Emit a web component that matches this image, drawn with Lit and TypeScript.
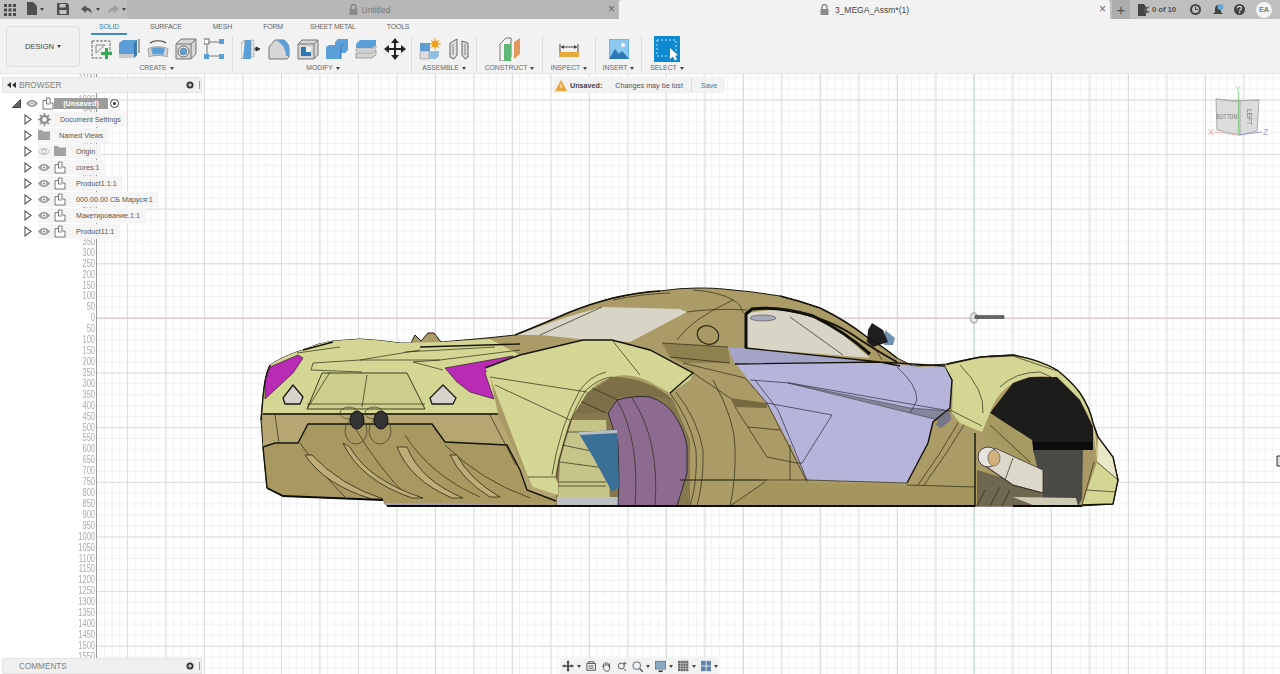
import { LitElement, html, css, svg } from 'lit';
import { customElement } from 'lit/decorators.js';

const BLUE = '#5b9fd8';

const gridIcon = html`<svg width="12" height="12" viewBox="0 0 12 12" fill="#4a4a4a"><rect x="0" y="0" width="3" height="3"/><rect x="4.5" y="0" width="3" height="3"/><rect x="9" y="0" width="3" height="3"/><rect x="0" y="4.5" width="3" height="3"/><rect x="4.5" y="4.5" width="3" height="3"/><rect x="9" y="4.5" width="3" height="3"/><rect x="0" y="9" width="3" height="3"/><rect x="4.5" y="9" width="3" height="3"/><rect x="9" y="9" width="3" height="3"/></svg>`;
const fileIcon = html`<svg width="10" height="13" viewBox="0 0 10 13" fill="#4f4f4f"><path d="M0 0h6l4 4v9H0z"/></svg>`;
const saveIcon = html`<svg width="12" height="12" viewBox="0 0 12 12"><path d="M0 0h10l2 2v10H0z" fill="#4f4f4f"/><rect x="2.5" y="1" width="6" height="3.5" fill="#c4c4c4"/><rect x="2.5" y="7" width="7" height="4" fill="#c4c4c4"/></svg>`;
const undoIcon = (c: string, flip = false) => html`<svg class=${flip ? 'flip' : ''} width="12" height="10" viewBox="0 0 12 10"><path d="M5 0 0 4l5 4V5.5c3 0 4.500 1 5.500 3.500C11 5 9 2.500 5 2.500z" fill=${c}/></svg>`;
const caret = html`<span class="caret"></span>`;
const lock = html`<svg width="9" height="11" viewBox="0 0 9 11"><path d="M2 5V3a2.500 2.500 0 0 1 5 0v2" fill="none" stroke="#777" stroke-width="1.200"/><rect x="0.500" y="5" width="8" height="6" fill="#8a8a8a"/></svg>`;

const icons: Record<string, unknown> = {
  sketch: html`<svg width="22" height="22" viewBox="0 0 22 22"><path d="M2 3h18v13M2 3v17h10" fill="none" stroke="#666" stroke-dasharray="3 1"/><path d="M6 7h9L6 15z" fill="none" stroke="#888"/><path d="M16 10h3v4h4v3h-4v4h-3v-4h-4v-3h4z" transform="translate(-1 0)" fill="#3aa655"/></svg>`,
  extrude: html`<svg width="22" height="22" viewBox="0 0 22 22"><path d="M1 5l4-3h14v15l-3 3H1z" fill="${BLUE}"/><path d="M16 20V5l3-3v15z" fill="#3d78ad"/><path d="M1 16h15v4H1z" fill="#c9c9c9"/><path d="M21 1v14" stroke="#555"/></svg>`,
  revolve: html`<svg width="22" height="22" viewBox="0 0 22 22"><path d="M1 11c3-3 17-3 20 0l-1 8c-3-2-15-2-18 0z" fill="#d2d2d2" stroke="#777" stroke-width=".6"/><path d="M4 11c3-2 11-2 14 0l-2 6c-2-1-8-1-10 0z" fill="${BLUE}"/><path d="M3 5c4-3 12-3 16 0" fill="none" stroke="#444" stroke-width="1.200"/></svg>`,
  hole: html`<svg width="22" height="22" viewBox="0 0 22 22"><path d="M1 6l5-5h15v15l-5 5H1z" fill="#d6d6d6" stroke="#777"/><path d="M16 21V6l5-5M1 6h15" fill="none" stroke="#777"/><circle cx="8.500" cy="13.500" r="5.500" fill="#eee" stroke="#666"/><circle cx="8.500" cy="13.500" r="3.500" fill="${BLUE}" stroke="#666" stroke-width=".5"/></svg>`,
  pattern: html`<svg width="20" height="22" viewBox="0 0 20 22"><path d="M5 4h10M3 7v9M5 18h10" stroke="#777" fill="none"/><rect x="0" y="1" width="5" height="5" fill="#fff" stroke="#666"/><rect x="15" y="1" width="5" height="5" fill="${BLUE}"/><rect x="0" y="16" width="5" height="5" fill="${BLUE}"/><rect x="15" y="16" width="5" height="5" fill="${BLUE}"/></svg>`,
  press: html`<svg width="20" height="22" viewBox="0 0 20 22"><path d="M0 5l4-3v17l-4 2z" fill="#eee" stroke="#777" stroke-width=".6"/><path d="M4 2h6v19H2z" fill="${BLUE}"/><path d="M10 2h3v17h-3z" fill="#e4e4e4" stroke="#888" stroke-width=".5"/><path d="M13 11h4M15 9l4 2-4 2z" fill="#333" stroke="#333"/></svg>`,
  fillet: html`<svg width="22" height="22" viewBox="0 0 22 22"><path d="M1 9l6-7h9c3 2 5 5 5 9v8l-2 2H1z" fill="#d6d6d6" stroke="#777"/><path d="M8 2h8c3 2 5 5 5 9v7h-3c0-8-4-12-10-16z" fill="${BLUE}"/></svg>`,
  shell: html`<svg width="22" height="22" viewBox="0 0 22 22"><path d="M1 6l4-4h16v15l-4 4H1z" fill="#d6d6d6" stroke="#777"/><path d="M17 21V6l4-4M1 6h16" fill="none" stroke="#777"/><path d="M4 9h10v9H4z" fill="#f2f2f2"/><path d="M4 9h5v5h5v4H4z" fill="#2f78b4"/></svg>`,
  combine: html`<svg width="22" height="22" viewBox="0 0 22 22"><path d="M9 4l3-3h10v11l-3 3H15v6H0V9l3-2h6z" fill="${BLUE}"/><path d="M15 21V9l3-3" stroke="#3d78ad" fill="none"/></svg>`,
  offset: html`<svg width="22" height="22" viewBox="0 0 22 22"><path d="M1 6l4-4h16v5l-4 3H1z" fill="${BLUE}"/><path d="M1 11h16l4-3v2l-4 3H1z" fill="#fff" stroke="#666" stroke-width=".6"/><path d="M1 15h16l4-3v5l-4 3H1z" fill="#d2d2d2" stroke="#777" stroke-width=".6"/></svg>`,
  move: html`<svg width="22" height="22" viewBox="0 0 22 22" fill="#222"><path d="M11 0l4 5h-3v5h5V7l5 4-5 4v-3h-5v5h3l-4 5-4-5h3v-5H5v3l-5-4 5-4v3h5V5H7z"/></svg>`,
  assemble: html`<svg width="22" height="22" viewBox="0 0 22 22"><path d="M1 5h10v8H1z" fill="${BLUE}"/><path d="M1 13h9v8H1z" fill="#dcdcdc" stroke="#888" stroke-width=".5"/><path d="M10 13h10v5l-3 3h-7z" fill="#8fbfe4"/><circle cx="16" cy="6" r="3.500" fill="#f0a020"/><path d="M16 0v12M10 6h12M12 2l8 8M20 2l-8 8" stroke="#f0a020"/></svg>`,
  joint: html`<svg width="20" height="22" viewBox="0 0 20 22"><path d="M1 5l7-4v16l-3 4-4-2z" fill="#ddd" stroke="#666"/><path d="M19 5l-6-2v14l3 4 3-2z" fill="#ddd" stroke="#666"/><path d="M4 6v11M16 6v11" stroke="#888"/></svg>`,
  construct: html`<svg width="22" height="24" viewBox="0 0 22 24"><path d="M1 7l6-6h5v19l-6 4H1z" fill="#f2f2f2" stroke="#777"/><path d="M5 7h7v17H5z" fill="#60b878"/><path d="M15 5l6-4v16l-6 5z" fill="#e09a60"/></svg>`,
  inspect: html`<svg width="22" height="20" viewBox="0 0 22 20"><path d="M2 5v8M20 5v8M3 8h16" stroke="#444" fill="none"/><path d="M3 8l3-2v4zM19 8l-3-2v4z" fill="#444"/><rect x="1" y="13" width="20" height="5" fill="#e5a93a"/></svg>`,
  insert: html`<svg width="20" height="20" viewBox="0 0 20 20"><rect width="20" height="20" fill="#6db4e8"/><rect x="1" y="1" width="18" height="18" fill="#8cc8f0"/><circle cx="14" cy="6" r="2" fill="#fff"/><path d="M0 20l6-10 4 5 3-3 7 8z" fill="#2d78b8"/></svg>`,
  select: html`<svg width="26" height="26" viewBox="0 0 26 26"><rect width="26" height="26" fill="#0f8ad0"/><rect x="3" y="4" width="19" height="16" fill="none" stroke="#bfe3f8" stroke-dasharray="2 2"/><path d="M16 12v11l3-2.500 2 4 2-1-2-4h3z" fill="#fff"/></svg>`,
};

const groups = [
  { label: 'CREATE', cls: 'create', icons: ['sketch', 'extrude', 'revolve', 'hole', 'pattern'] },
  { label: 'MODIFY', cls: 'modify', icons: ['press', 'fillet', 'shell', 'combine', 'offset', 'move'] },
  { label: 'ASSEMBLE', cls: 'assemble', icons: ['assemble', 'joint'] },
  { label: 'CONSTRUCT', cls: 'construct', icons: ['construct'] },
  { label: 'INSPECT', cls: 'inspect', icons: ['inspect'] },
  { label: 'INSERT', cls: 'insert', icons: ['insert'] },
  { label: 'SELECT', cls: 'select', icons: ['select'] },
];

const eye = (on = true) => html`<svg width="12" height="9" viewBox="0 0 12 9"><path d="M0.500 4.500C3 0.500 9 0.500 11.500 4.500 9 8.500 3 8.500 0.500 4.500z" fill=${on ? '#a8a8a8' : 'none'} stroke=${on ? '#999' : '#bbb'}/><circle cx="6" cy="4.500" r="2" fill=${on ? '#fff' : 'none'} stroke=${on ? 'none' : '#bbb'}/><circle cx="6" cy="4.500" r="1" fill=${on ? '#888' : 'none'}/></svg>`;
const comp = html`<svg width="12" height="13" viewBox="0 0 12 13"><path d="M1 3.500h3.500V1H8v5h3v6H1z" fill="#fff" stroke="#777"/><path d="M4.500 3.500V7H8" fill="none" stroke="#777"/></svg>`;
const folder = html`<svg width="12" height="10" viewBox="0 0 12 10"><path d="M0 0h4l1 1.500h7V10H0z" fill="#a2a2a2"/></svg>`;
const gear = html`<svg width="13" height="13" viewBox="0 0 13 13"><circle cx="6.500" cy="6.500" r="3.500" fill="none" stroke="#8a8a8a" stroke-width="2.200"/><path d="M6.500 0v13M0 6.500h13M2 2l9 9M11 2l-9 9" stroke="#8a8a8a" stroke-width="1.500" stroke-dasharray="2 9"/></svg>`;
const tri = html`<svg width="8" height="11" viewBox="0 0 8 11"><path d="M1 1l6 4.500L1 10z" fill="#fff" stroke="#555" stroke-width="1.100"/></svg>`;
const pin = html`<svg width="8" height="8" viewBox="0 0 8 8"><circle cx="4" cy="4" r="3.500" fill="#333"/><path d="M2 4h4M4 2v4" stroke="#f2f2f2"/></svg>`;
const collapse = html`<svg width="9" height="6" viewBox="0 0 9 6" fill="#333"><path d="M4 0v6L0 3zM9 0v6L5 3z"/></svg>`;

const rows = [
  { label: 'Document Settings', kind: 'settings' },
  { label: 'Named Views', kind: 'views' },
  { label: 'Origin', kind: 'origin' },
  { label: 'cores:1', kind: 'comp' },
  { label: 'Product1.1:1', kind: 'comp' },
  { label: '000.00.00 СБ Маруся:1', kind: 'comp' },
  { label: 'Макетирование.1:1', kind: 'comp' },
  { label: 'Product11:1', kind: 'comp' },
];

const navIcons = html`
  <svg width="14" height="14" viewBox="0 0 14 14" fill="#444"><path d="M7 0l2 3H8v3h3V5l3 2-3 2V8H8v3h1l-2 3-2-3h1V8H3v1L0 7l3-2v1h3V3H5z"/></svg>${caret}
  <svg class="sp" width="12" height="12" viewBox="0 0 12 12"><path d="M1 3h10v8H1zM3 3V1h6v2M3 6h6M3 8.500h6" fill="none" stroke="#444"/></svg>
  <svg class="sp" width="12" height="13" viewBox="0 0 12 13"><path d="M3 7V3M5 6V1.500M7 6V1.500M9 7V3M3 7L1.500 6M3 7c0 4 2 5 4 5s3-1 3-4V3" fill="none" stroke="#444"/></svg>
  <svg class="sp" width="12" height="12" viewBox="0 0 12 12"><circle cx="5" cy="6" r="3.500" fill="none" stroke="#444"/><path d="M8 9l3 3" stroke="#444"/><path d="M9 1v4M7 3h4" stroke="#666"/></svg>
  <svg class="sp" width="13" height="13" viewBox="0 0 13 13"><circle cx="5.500" cy="5.500" r="4.500" fill="#eef4f8" stroke="#555"/><path d="M9 9l4 4" stroke="#444" stroke-width="1.500"/></svg>${caret}
  <svg class="sp" width="13" height="13" viewBox="0 0 13 13"><rect width="13" height="10" fill="#5c7f9e"/><rect x="1" y="1" width="11" height="8" fill="#8aa7bf"/><path d="M4 12h5" stroke="#444" stroke-width="2"/></svg>${caret}
  <svg class="sp" width="12" height="12" viewBox="0 0 12 12"><rect width="12" height="12" fill="#666"/><path d="M3 0v12M6 0v12M9 0v12M0 3h12M0 6h12M0 9h12" stroke="#ddd" stroke-width=".6"/></svg>${caret}
  <svg class="sp" width="12" height="12" viewBox="0 0 12 12"><rect width="12" height="12" fill="#5c84ad"/><path d="M6 0v12M0 6h12" stroke="#eee"/></svg>${caret}
`;

// rear 3/4 side view, coordinates are window pixels
const carScene = svg`
  <line class="ax-g" x1="974" y1="74" x2="974" y2="674"/>
  <line class="ax-r" x1="97" y1="318" x2="1280" y2="318"/>
  <ellipse class="org" cx="974" cy="318" rx="3.500" ry="5"/>
  <path class="bar" d="M975 315.500h29v3h-29z"/>

  <path class="body" d="M261 420 263 397Q265 375 270 365 285 355 303 350 318 343 333 341L360 339Q380 340 400 343L411 343 415 335 421 341 428 333 434 333 441 342 487 338 515 335Q540 325 570 312 590 304 613 298 640 292 660 291 680 288 697 288 715 288 723 289 750 291 780 296 800 301 820 308 845 320 867 337 885 348 897 358L913 366 947 364Q970 358 990 356L1013 355Q1040 360 1057 370 1072 382 1080 393 1090 408 1093 423L1098 437 1113 457 1118 480 1113 504 1080 506 387 506 383 500 283 496 267 488 263 447Z"/>
  <path class="shade" d="M662 343 728 347 730 363 684 363 670 357Z"/>
  <path class="sill" d="M730 506 765 482 907 485 975 487V506Z"/>

  <path class="win" d="M517 335Q560 318 602 307L680 309 687 312 630 342 590 340 540 335Z"/>
  <path class="ln" d="M540 335 602 307M613 300Q640 294 670 293M687 312Q715 308 747 310M677 340Q690 320 733 300M693 290Q720 292 733 300 741 304 743 313M662 343 728 347M670 357 730 363"/>
  <ellipse class="filler" cx="708" cy="335" rx="11" ry="9" transform="rotate(20 708 335)"/>

  <path class="deck" d="M262 413 263 397Q265 375 270 365 285 355 303 350 318 343 333 341L360 339Q380 340 400 343L441 342 490 339 520 355 485 368 490 377 498 413Z"/>
  <path class="recess" d="M322 373 407 373 425 409 307 409Z"/>
  <path class="ln" d="M297 353 340 347M313 363 360 360 440 360 413 362 443 370M313 363 311 370 362 372M367 375 362 407M330 372 307 409M307 404 425 404M405 352 495 347M360 360 420 350M440 360 520 350"/>
  <path class="ln thick" d="M420 347 520 344"/>
  <path class="ln thick" d="M303 350 333 342"/>

  <path class="light" d="M270 367 298 355 303 358 293 373 265 399 265 380Z"/>
  <path class="light" d="M445 368 513 356 490 367 485 373 494 399 470 392 457 382Z"/>
  <path class="vent" d="M293 385 303 397 300 404H285L283 398Z"/>
  <path class="vent" d="M443 385 456 398 453 404H432L430 398Z"/>

  <path class="lower" d="M263 415H498L528 480 558 495 540 500 387 506 383 500 283 496 267 488 263 447Z"/>
  <path class="diff" d="M263 447 275 443H298L308 424H432L445 442 507 445 520 470 527 490 556 501 540 503H387L383 500 283 496 267 488Z"/>
  <path class="ln thick" d="M263 414H498"/>
  <path class="ln thick" d="M263 447 275 443H298L308 424H432L445 442 507 445 520 470 527 490 556 501"/>
  <path class="ln" d="M275 415 279 443M490 415 516 465M300 443Q320 472 345 497M355 428Q380 470 408 497M405 435Q430 475 480 497M445 445Q480 480 530 498"/>
  <path class="fin" d="M305 455H312Q340 485 383 499H372Q325 485 305 455Z"/>
  <path class="fin" d="M343 443 350 447Q368 480 423 498H412Q360 480 343 443Z"/>
  <path class="fin" d="M397 447H407Q420 480 463 498H452Q410 480 397 447Z"/>
  <path class="fin" d="M450 455H457Q470 480 500 497H490Q462 480 450 455Z"/>
  <ellipse class="pipe-r" cx="349" cy="413" rx="9" ry="6"/>
  <ellipse class="pipe-r" cx="374" cy="413" rx="9" ry="6"/>
  <ellipse class="pipe-r" cx="356" cy="431" rx="11" ry="13"/>
  <ellipse class="pipe-r" cx="380" cy="431" rx="11" ry="13"/>
  <ellipse class="pipe" cx="357" cy="420" rx="7" ry="9"/>
  <ellipse class="pipe" cx="381" cy="420" rx="7" ry="9"/>
  <path class="lavlow" d="M387 506 383 503H440L550 506Z"/>

  <path class="arch" d="M556 506V477L558 460 570 420 587 393 612 377Q650 378 673 400L690 440V506Z"/>
  <path class="archtop" d="M570 420 587 393 612 377Q650 378 673 400L660 397H617L606 413H575Z"/>
  <path class="archlight" d="M560 460 572 420H606L610 500H558Z"/>
  <path class="ln" d="M566 432H606M562 445 596 452M560 462 605 468M558 482H606M558 486H606M578 400 606 413M592 388 618 400"/>
  <path class="steel" d="M557 497H620V506H557Z"/>
  <path class="wheel" d="M608 413 617 400Q635 395 650 397 665 402 673 413 685 430 687 447V473L677 506H618L619 480 618 443Z"/>
  <path class="ln" d="M617 400Q640 440 635 506M632 398Q660 440 655 506"/>
  <path class="blue" d="M578 432 617 430 619 487 612 492 593 457Z"/>
  <path class="steel" d="M578 432 617 430V433L580 435Z"/>

  <path class="fender" d="M485 368 520 355 583 340 612 340 650 350 693 373 690 380 670 393 650 382Q630 372 612 377 597 382 587 393L570 420 558 460 555 477 558 483V495L533 487 528 477 490 377Z"/>
  <path class="ln" d="M490 377 587 392M495 385 570 420M612 340 640 375M612 377Q600 378 586 390 566 420 556 478M606 372Q590 376 580 390 560 425 552 475M528 477 555 477"/>
  <path class="ln thick" d="M485 368 520 355 583 340 612 340 650 350 693 373 670 393"/>
  <path class="ln" d="M670 393Q690 420 696 450 698 480 690 506M676 392Q698 420 703 450 704 480 697 506M713 380Q735 420 735 447 736 480 730 506M683 363 745 378M693 373 733 400M680 480H767"/>

  <path class="win" d="M747 313 777 309 813 317 840 332 870 358 747 348Z"/>
  <path class="frame" d="M746 348V314L752 309Q780 306 813 316 845 332 870 354"/>
  <path class="frame2" d="M780 309Q820 315 850 333 875 350 897 362"/>
  <path class="ln" d="M790 317 843 355"/>
  <ellipse class="seal" cx="763" cy="318" rx="13" ry="3"/>
  <path class="mirror-e" d="M885 330 895 338 893 345 884 345Z"/>
  <path class="mirror" d="M872 323 883 330 888 342 873 347 867 342 868 330Z"/>
  <path class="ln" d="M874 347 882 360"/>

  <path class="door" d="M728 348 745 348 880 362 920 367 945 366 952 380 950 408 933 422 928 443 907 483 807 480 793 450 767 403 735 363Z"/>
  <path class="door2" d="M728 348 745 348 880 362 840 361 735 364Z"/>
  <path class="crease" d="M788 383 910 408 950 411 938 420 910 413Z"/>
  <path class="crease2" d="M938 420 950 411 951 420 941 428 936 425Z"/>
  <path class="ln blue-l" d="M767 403 832 415 802 463M750 380 790 383 950 411M897 367Q917 385 917 400L910 413M745 378 767 403M755 380 778 410 807 480"/>
  <path class="ln thick" d="M735 364 880 362 945 366M745 348 880 362 900 366"/>
  <path class="ln thick" d="M945 366 952 380 950 408 933 422 928 443 907 483"/>
  <path class="ln" d="M807 480 907 483M767 403 807 482"/>

  <path class="vent2" d="M730 398 767 403V408L735 407Z"/>
  <path class="ln" d="M735 407 767 457 797 463M748 427 780 430M797 463 802 463M790 480V445M680 480H807M730 506 765 482M907 485 975 487"/>
  <path class="ln" d="M918 485Q940 455 958 423M924 485Q946 455 964 425"/>

  <path class="fender" d="M945 366 980 358 1013 356Q1040 360 1057 370 1072 382 1080 393 1090 408 1093 423 1097 440 1097 460L1093 427Q1085 400 1057 378 1035 372 1013 383 995 395 990 413L982 432 960 423 952 413 953 380Z"/>
  <path class="ln" d="M960 365Q985 390 983 413M990 357 1013 356 1057 371M1000 387Q1015 372 1040 372 1075 385 1090 425M950 410 982 426"/>
  <path class="ln thick" d="M947 364 980 357 1013 355Q1040 360 1057 370 1072 382 1080 393 1090 408 1093 423"/>
  <path class="black" d="M990 413 1013 383 1030 377H1057L1080 400 1093 427V448H1033L1032 440Z"/>
  <path class="gray" d="M1033 450H1083V497L1078 506 1013 497 1043 490Z"/>
  <path class="black2" d="M1033 442H1093V450H1033Z"/>
  <path class="ltan" d="M983 432 990 413 1032 442V470L1000 445 985 445Z"/>
  <path class="dim" d="M977 470 1043 490V498L1013 497 1078 506H977Z"/>
  <path class="ln" d="M985 490 977 506M1000 487 990 506M1010 490 1002 506M990 425 1030 462"/>
  <path class="pale" d="M1013 497 1076 498 1078 506H1035Z"/>
  <path class="white" d="M995 448 1043 470V493L1013 485 987 467Z"/>
  <path class="ln" d="M1013 458 1005 480M1013 485 1043 493M985 466 1013 485"/>
  <circle class="ring" cx="988" cy="457" r="10"/>
  <ellipse class="ring2" cx="994" cy="458" rx="6" ry="8"/>
  <path class="tanpanel" d="M1083 450H1093V460L1082 505Z"/>
  <path class="ln thick" d="M975 433V506"/>
  <path class="nose" d="M1098 437 1113 457 1118 480 1097 462Z"/>
  <path class="fender" d="M1097 462 1118 480 1113 504 1082 505Z"/>
  <path class="ln" d="M1097 462 1118 480M1087 490 1116 492M1094 462 1082 505"/>
  <path class="ln thick" d="M1093 423 1098 437 1113 457 1118 480 1113 504 1082 505"/>
  <path class="ln heavy" d="M387 506H975M1013 506H1082M267 488 283 496 383 500"/>
  <path class="ln thick" d="M515 335Q540 325 570 312 590 304 613 298 640 292 660 291M780 296Q800 301 820 308 845 320 867 337 885 348 897 358"/>
  <path class="ln thick" d="M261 420 263 397Q265 375 270 365M263 447 267 488"/>

  <g class="cube">
    <path class="cube-f" d="M1216 99 1233 101 1259 100 1257 131 1240 135 1217 130Z"/>
    <path class="cube-l" d="M1216 99 1233 101 1259 100M1240 135 1240 100"/>
    <text class="cube-t" x="1216.500" y="119" textLength="21" lengthAdjust="spacingAndGlyphs">BOTTOM</text>
    <text class="cube-t" transform="translate(1247 109) rotate(90)" textLength="16" lengthAdjust="spacingAndGlyphs">LEFT</text>
    <path class="cube-y" d="M1238.500 92V135"/>
    <path class="cube-x" d="M1214 132 1238.500 135"/>
    <path class="cube-z" d="M1238.500 135 1262 132"/>
    <text class="lab-y" x="1235" y="92">Y</text>
    <text class="lab-x" x="1208" y="135">X</text>
    <text class="lab-z" x="1263" y="135">Z</text>
  </g>
  <path class="cursor" d="M1280 456h-3v10h3"/>
`;

const rulerLabels: number[] = [];
for (let v = 1100; v >= 50; v -= 50) rulerLabels.push(v);
for (let v = 0; v <= 1550; v += 50) rulerLabels.push(v);

@customElement('app-root')
export class AppRoot extends LitElement {
  static styles = css`
    :host {
      display: block;
      width: 1280px;
      height: 674px;
      overflow: hidden;
      font-family: 'Liberation Sans', Arial, sans-serif;
      color: #555;
      background: #fff;
    }
    .app { display: flex; flex-direction: column; height: 674px; }

    /* title bar */
    .titlebar { display: flex; height: 19px; background: #bfbfbf; flex: none; }
    .qat { width: 127px; display: flex; align-items: center; padding-left: 4px; box-sizing: border-box; }
    .qat .f { margin-left: 11px; }
    .qat .s { margin-left: 13px; }
    .qat .u { margin-left: 12px; }
    .qat .r { margin-left: 7px; }
    .flip { transform: scaleX(-1); opacity: .45; }
    .caret {
      display: inline-block; margin-left: 3px; width: 0; height: 0;
      border-left: 2px solid transparent; border-right: 2px solid transparent; border-top: 3px solid #444;
      vertical-align: middle;
    }
    .tab {
      width: 491px; display: flex; align-items: center; justify-content: center; gap: 4px;
      position: relative; font-size: 8.500px; color: #777; background: #b7b7b7; padding-right: 6px; box-sizing: border-box;
    }
    .tab.active { background: #f2f2f2; color: #444; margin-left: 1px; border-radius: 3px 3px 0 0; padding-right: 0; gap: 6px; }
    .tab .x { position: absolute; right: 3px; top: 3px; font-size: 12px; line-height: 13px; color: #666; }
    .tab.active .x { right: 4px; }
    .plus {
      margin-left: 2px; width: 18px; height: 19px; background: #acacac; color: #555;
      display: flex; align-items: center; justify-content: center; font-size: 15px; line-height: 15px;
    }
    .right { flex: 1; display: flex; align-items: center; padding-left: 8px; font-size: 8px; font-weight: bold; color: #555; }
    .right .count { margin-left: 2px; letter-spacing: -.2px; }
    .right .clock { margin-left: 14px; }
    .right .bell { margin-left: 12px; }
    .right .help { margin-left: 10px; }
    .right .user {
      margin-left: 11px; width: 16px; height: 16px; border-radius: 50%; background: #f2f2f2;
      display: flex; align-items: center; justify-content: center; font-size: 7px; font-weight: normal; color: #444;
    }

    /* ribbon */
    .ribbon { display: flex; height: 55px; background: #f2f2f2; flex: none; border-bottom: 1px solid #e6e6e6; box-sizing: border-box; }
    .design {
      margin: 7px 0 0 6px; width: 74px; height: 41px; box-sizing: border-box; background: #f0f0f0;
      border: 1px solid #dedede; border-radius: 4px;
      display: flex; align-items: center; justify-content: center; font-size: 7.600px; color: #444;
    }
    .ribbon-main { margin-left: 6px; display: flex; flex-direction: column; }
    .tabs { display: flex; gap: 15px; padding-left: 5px; height: 17px; font-size: 7px; letter-spacing: -.2px; color: #666; box-sizing: border-box; padding-top: 4px; }
    .tabs span { padding: 0 8px; height: 12px; box-sizing: border-box; white-space: nowrap; }
    .tabs span:nth-child(5) { margin-left: -4px; }
    .tabs .on { color: #2d82b5; border-bottom: 2px solid #3a8fc0; }
    .groups { display: grid; grid-template-columns: 147px 179px 65px 66px 53px 46px 50px; height: 36px; }
    .group { display: flex; flex-direction: column; align-items: center; border-right: 1px solid #dcdcdc; box-sizing: border-box; height: 36px; }
    .group:last-child { border-right: 0; }
    .group .icons { display: flex; flex: none; align-items: center; height: 25px; gap: 7px; }
    .group .icons svg { flex: none; }
    .group .lab { flex: none; font-size: 6.800px; line-height: 10px; margin-top: 2px; color: #666; white-space: nowrap; }
    .group.create { padding-right: 5px; }
    .group.create .icons { gap: 6.500px; }
    .group.modify { padding-left: 2px; }
    .group.assemble .icons { gap: 8px; }

    /* viewport */
    .viewport { flex: 1; display: flex; position: relative; overflow: hidden; }
    .ruler { width: 97px; box-sizing: border-box; border-right: 1px solid #999; flex: none; padding-right: 1px; }
    .ruler .wrap { margin-top: -1px; }
    .ruler span {
      display: block; height: 10.930px; line-height: 10.930px; text-align: right; font-size: 10px; color: #aaa;
      transform: scaleX(.75); transform-origin: right center;
    }
    .grid {
      flex: 1;
      background-image:
        linear-gradient(to right, #dcdcdc 1px, transparent 1px),
        linear-gradient(to bottom, #dcdcdc 1px, transparent 1px),
        linear-gradient(to right, #f1f1f1 1px, transparent 1px),
        linear-gradient(to bottom, #f1f1f1 1px, transparent 1px);
      background-size: 38.500px 100%, 100% 54.650px, 7.700px 100%, 100% 10.930px;
      background-position: 30px 0, 0 25.400px, 30px 0, 0 3.500px;
    }
    .scene { position: absolute; left: 97px; top: 0; filter: blur(.3px); }

    /* browser */
    .browser { position: absolute; left: 2px; top: 3px; width: 200px; }
    .panel-head {
      height: 16px; background: #f0f0f0; border: 1px solid #e4e4e4; box-sizing: border-box;
      display: flex; align-items: center; font-size: 8.200px; color: #808080; padding-left: 4px;
    }
    .panel-head .arrows { width: 12px; display: flex; }
    .panel-head .title { flex: 1; }
    .panel-head .grip { margin-left: 5px; width: 2px; height: 8px; border-left: 1px solid #999; box-sizing: border-box; }
    .tree { padding-top: 2px; }
    .row { display: flex; align-items: center; height: 16px; font-size: 7.200px; color: #555; }
    .row .t { width: 8px; margin-left: 22px; margin-right: 6px; display: flex; }
    .chip { display: flex; align-items: center; height: 15px; background: rgba(244, 244, 244, .92); padding-right: 6px; }
    .chip svg { flex: none; }
    .chip .i2 { margin-left: 4px; display: flex; }
    .chip .name { margin-left: 10px; white-space: nowrap; }
    .chip.flat .name { margin-left: 9px; }
    .root { display: flex; align-items: center; height: 16px; }
    .root .t { margin-left: 10px; width: 9px; display: flex; }
    .root .e { margin-left: 5px; display: flex; }
    .root .c { margin-left: 4px; display: flex; }
    .root .name {
      width: 54px; height: 11px; line-height: 11px; background: #9c9c9c; color: #fff;
      font-size: 7.400px; font-weight: bold; text-align: center;
    }
    .root .radio { margin-left: 2px; width: 9px; height: 9px; box-sizing: border-box; border: 1px solid #444; border-radius: 50%; background: #fff; display: flex; align-items: center; justify-content: center; }
    .root .radio i { width: 3px; height: 3px; border-radius: 50%; background: #333; }

    /* unsaved banner */
    .unsaved {
      position: absolute; left: 553px; top: 3px; height: 16px; width: 172px; background: #f2f2f2;
      display: flex; align-items: center; font-size: 7.200px; color: #555; box-sizing: border-box; padding-left: 2px; white-space: nowrap;
    }
    .unsaved b { margin-left: 3px; color: #444; }
    .unsaved .msg { margin-left: 13px; }
    .unsaved .sep { margin-left: 8px; height: 14px; border-left: 1px solid #ddd; }
    .unsaved .save { margin-left: 9px; color: #3f7f9f; }

    .comments { position: absolute; left: 2px; bottom: 0; width: 200px; }
    .comments .panel-head { padding-left: 16px; }

    .nav {
      position: absolute; left: 560px; bottom: 0; height: 16px; width: 158px; background: #f2f2f2;
      display: flex; align-items: center; box-sizing: border-box; padding-left: 2px;
    }
    .nav .sp { margin-left: 5px; }

    /* scene paints */
    .ax-g { stroke: #c4e4c4; }
    .ax-r { stroke: #e6c2c2; }
    .org { fill: none; stroke: #bbb; stroke-width: 2; }
    .bar { fill: #666; stroke: #333; stroke-width: .5; }
    .body { fill: #ab9b66; stroke: #1c1a10; stroke-width: 1; }
    .shade { fill: #8f804f; }
    .sill { fill: #a4965c; }
    .win { fill: #d9d5c6; }
    .ln { fill: none; stroke: #2c2a14; stroke-width: .7; }
    .thick { stroke: #15140a; stroke-width: 1.400; }
    .heavy { stroke: #0c0c06; stroke-width: 1.800; }
    .filler { fill: #a99964; stroke: #2c2a14; stroke-width: 1.200; }
    .deck, .fender { fill: #d4d793; }
    .recess { fill: #cccf8b; stroke: #2c2a14; stroke-width: .9; }
    .light { fill: #b92bb4; stroke: #30202c; stroke-width: .7; }
    .vent { fill: #d6d3cd; stroke: #1a1a10; stroke-width: 1.300; stroke-linejoin: round; }
    .lower { fill: #b6a671; }
    .diff { fill: #a9985f; }
    .fin { fill: #bdae78; stroke: #2c2a14; stroke-width: .8; }
    .pipe-r { fill: none; stroke: #4a4630; stroke-width: .8; }
    .pipe { fill: #333; stroke: #111; }
    .lavlow { fill: #a69bb4; }
    .arch { fill: #85784e; }
    .archtop { fill: #7d7049; }
    .archlight { fill: #c6c488; }
    .steel { fill: #bcc0c4; }
    .wheel { fill: #8d6a90; stroke: #1c1a20; stroke-width: .8; }
    .blue { fill: #3a6f96; }
    .frame { fill: none; stroke: #0e0e0a; stroke-width: 3; }
    .frame2 { fill: none; stroke: #15140a; stroke-width: 1.800; }
    .seal { fill: #a9a9bb; stroke: #333; stroke-width: .5; }
    .mirror { fill: #1f1f22; }
    .mirror-e { fill: #6f8fb5; }
    .door { fill: #b6b4da; }
    .door2 { fill: #a4a4c8; }
    .crease { fill: #85859b; stroke: #333; stroke-width: .5; }
    .crease2 { fill: #77778c; }
    .blue-l { stroke: #2b2b40; }
    .vent2 { fill: #77693f; }
    .black { fill: #1c1c1a; }
    .black2 { fill: #0c0c0c; }
    .gray { fill: #4a4a47; }
    .ltan { fill: #a69a62; }
    .dim { fill: #6f6750; }
    .pale { fill: #cfcab4; }
    .white { fill: #dcd9cb; stroke: #222; stroke-width: .7; }
    .ring { fill: #e6e4dc; stroke: #444; }
    .ring2 { fill: #d4b17c; stroke: #555; stroke-width: .7; }
    .tanpanel { fill: #a99964; }
    .nose { fill: #e8e8c6; }
    .cube-f { fill: #dcdcdc; stroke: #aaa; }
    .cube-l { fill: none; stroke: #aaa; }
    .cube-t { font-size: 6.500px; fill: #777; font-family: 'Liberation Sans', Arial, sans-serif; }
    .cube-y { stroke: #8fce8f; stroke-width: 1.200; fill: none; }
    .cube-x { stroke: #e5b5b5; stroke-width: 1.200; fill: none; }
    .cube-z { stroke: #9aa0d0; stroke-width: 1.200; fill: none; }
    .lab-y, .lab-x, .lab-z { font-size: 9px; font-family: 'Liberation Sans', Arial, sans-serif; }
    .lab-y { fill: #a8dca8; }
    .lab-x { fill: #e5a8a8; }
    .lab-z { fill: #a0a6d8; }
    .cursor { fill: #ddd; stroke: #333; }
  `;

  private row(r: { label: string; kind: string }) {
    let lead;
    if (r.kind === 'settings') lead = gear;
    else if (r.kind === 'views') lead = folder;
    else if (r.kind === 'origin') lead = html`${eye(false)}<span class="i2">${folder}</span>`;
    else lead = html`${eye()}<span class="i2">${comp}</span>`;
    const flat = r.kind === 'settings' || r.kind === 'views';
    return html`<div class="row">
      <span class="t">${tri}</span>
      <span class="chip ${flat ? 'flat' : ''}">${lead}<span class="name">${r.label}</span></span>
    </div>`;
  }

  render() {
    return html`
      <div class="app">
        <div class="titlebar">
          <div class="qat">
            ${gridIcon}
            <span class="f">${fileIcon}</span>${caret}
            <span class="s">${saveIcon}</span>
            <span class="u">${undoIcon('#555')}</span>${caret}
            <span class="r">${undoIcon('#777', true)}</span>${caret}
          </div>
          <div class="tab">${lock}<span>Untitled</span><span class="x">×</span></div>
          <div class="tab active">${lock}<span>3_MEGA_Assm*(1)</span><span class="x">×</span></div>
          <div class="plus">+</div>
          <div class="right">
            <svg width="12" height="12" viewBox="0 0 12 12"><path d="M0 0h6l2 3v9H0z" fill="#444"/><path d="M6 4l6-2-4 4 4 2-6 2z" fill="#555"/></svg>
            <span class="count">0 of 10</span>
            <svg class="clock" width="11" height="11" viewBox="0 0 11 11"><circle cx="5.500" cy="5.500" r="5.500" fill="#444"/><circle cx="5.500" cy="5.500" r="3.500" fill="#bfbfbf"/><path d="M5.500 3v2.500H8" fill="none" stroke="#444"/></svg>
            <svg class="bell" width="11" height="12" viewBox="0 0 11 12"><path d="M5 1C3 1 2 3 2 5v3L0 10h10L8 8V5C8 3 7 1 5 1z" fill="#444"/><circle cx="7.500" cy="3" r="3" fill="#6aaad8"/></svg>
            <svg class="help" width="11" height="11" viewBox="0 0 11 11"><circle cx="5.500" cy="5.500" r="5.500" fill="#444"/><path d="M3.500 4.200c0-2.500 4-2.500 4 0 0 1.500-2 1.500-2 3" fill="none" stroke="#ddd" stroke-width="1.200"/><rect x="5" y="8" width="1.200" height="1.200" fill="#ddd"/></svg>
            <span class="user">EA</span>
          </div>
        </div>

        <div class="ribbon">
          <div class="design"><span>DESIGN</span>${caret}</div>
          <div class="ribbon-main">
            <div class="tabs">
              <span class="on">SOLID</span><span>SURFACE</span><span>MESH</span><span>FORM</span><span>SHEET METAL</span><span>TOOLS</span>
            </div>
            <div class="groups">
              ${groups.map(g => html`
                <div class="group ${g.cls}">
                  <div class="icons">${g.icons.map(i => icons[i])}</div>
                  <div class="lab">${g.label}${caret}</div>
                </div>`)}
            </div>
          </div>
        </div>

        <div class="viewport">
          <div class="ruler"><div class="wrap">${rulerLabels.map(v => html`<span>${v}</span>`)}</div></div>
          <div class="grid"></div>
          <svg class="scene" width="1183" height="600" viewBox="97 74 1183 600">${carScene}</svg>

          <div class="browser">
            <div class="panel-head"><span class="arrows">${collapse}</span><span class="title">BROWSER</span>${pin}<span class="grip"></span></div>
            <div class="tree">
              <div class="root">
                <span class="t"><svg width="9" height="9" viewBox="0 0 9 9"><path d="M8.500 0.500v8H0.500z" fill="#666" stroke="#444"/></svg></span>
                <span class="e">${eye()}</span>
                <span class="c">${comp}</span>
                <span class="name">(Unsaved)</span>
                <span class="radio"><i></i></span>
              </div>
              ${rows.map(r => this.row(r))}
            </div>
          </div>

          <div class="unsaved">
            <svg width="12" height="11" viewBox="0 0 12 11"><path d="M6 0l6 11H0z" fill="#e8a33a"/><path d="M6 4v4" stroke="#fff"/></svg>
            <b>Unsaved:</b><span class="msg">Changes may be lost</span><span class="sep"></span><span class="save">Save</span>
          </div>

          <div class="comments">
            <div class="panel-head"><span class="title">COMMENTS</span>${pin}<span class="grip"></span></div>
          </div>

          <div class="nav">${navIcons}</div>
        </div>
      </div>
    `;
  }
}
